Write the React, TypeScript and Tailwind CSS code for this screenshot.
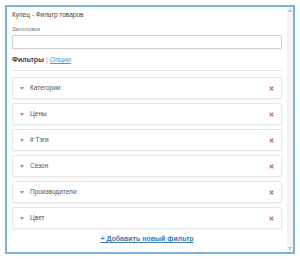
const filters = ["Категории", "Цены", "# Тэги", "Сезон", "Производители", "Цвет"];

function FilterRow({ label }: { label: string }) {
  return (
    <div className="flex h-[22px] items-center rounded-[2px] border border-[#e6e6e6] bg-white pl-[7px] pr-[7px] shadow-[0_1px_1px_rgba(0,0,0,0.04)]">
      <svg width="4" height="3" viewBox="0 0 4 3" className="shrink-0">
        <path d="M0 0 H4 L2 3 Z" fill="#b98585" />
      </svg>
      <span className="ml-[6px] flex-1 text-[6.5px] text-[#555]">{label}</span>
      <svg width="5" height="5" viewBox="0 0 5 5" className="shrink-0">
        <path d="M0.7 0.7 L4.3 4.3 M4.3 0.7 L0.7 4.3" stroke="#d05c5c" strokeWidth="1.2" />
      </svg>
    </div>
  );
}

export default function App() {
  return (
    <div className="h-[259px] w-[300px] bg-white p-[5px] font-['Liberation_Sans',Arial,sans-serif]">
      <div className="flex h-[249px] w-[290px] border-2 border-[#7ab1e0] bg-white">
        <div className="flex flex-1 flex-col pl-[5px] pr-[5px] pt-[3px]">
          <div className="h-[10px] text-[6.5px] leading-[10px] text-[#444]">Купец - Фильтр товаров</div>
          <div className="mt-[4px] h-[10px] text-[6px] leading-[10px] text-[#777]">Заголовок</div>
          <div className="mt-[1px] h-[14px] rounded-[1px] border border-[#cfcfcf] bg-white" />
          <div className="mt-[6px] h-[10px] text-[7px] leading-[10px]">
            <span className="font-bold text-[#444]">Фильтры</span>
            <span className="text-[#999]"> | </span>
            <span className="text-[#5b93cc] underline">Опции</span>
          </div>
          <div className="mt-[5px] h-px bg-[#e2e2e2]" />
          <div className="mt-[6px] flex flex-col gap-[4px]">
            {filters.map(f => (
              <FilterRow key={f} label={f} />
            ))}
          </div>
          <div className="mt-[5px] h-[10px] text-center text-[7px] leading-[10px]">
            <span className="font-bold text-[#4178b0] underline">+ Добавить новый фильтр</span>
          </div>
        </div>
        <div className="flex w-[6px] flex-col items-center justify-between bg-[#f4f4f4] py-[2px]">
          <svg width="4" height="3" viewBox="0 0 4 3">
            <path d="M0 3 L2 0 L4 3 Z" fill="#bbb" />
          </svg>
          <svg width="4" height="3" viewBox="0 0 4 3">
            <path d="M0 0 L2 3 L4 0 Z" fill="#bbb" />
          </svg>
        </div>
      </div>
    </div>
  );
}
